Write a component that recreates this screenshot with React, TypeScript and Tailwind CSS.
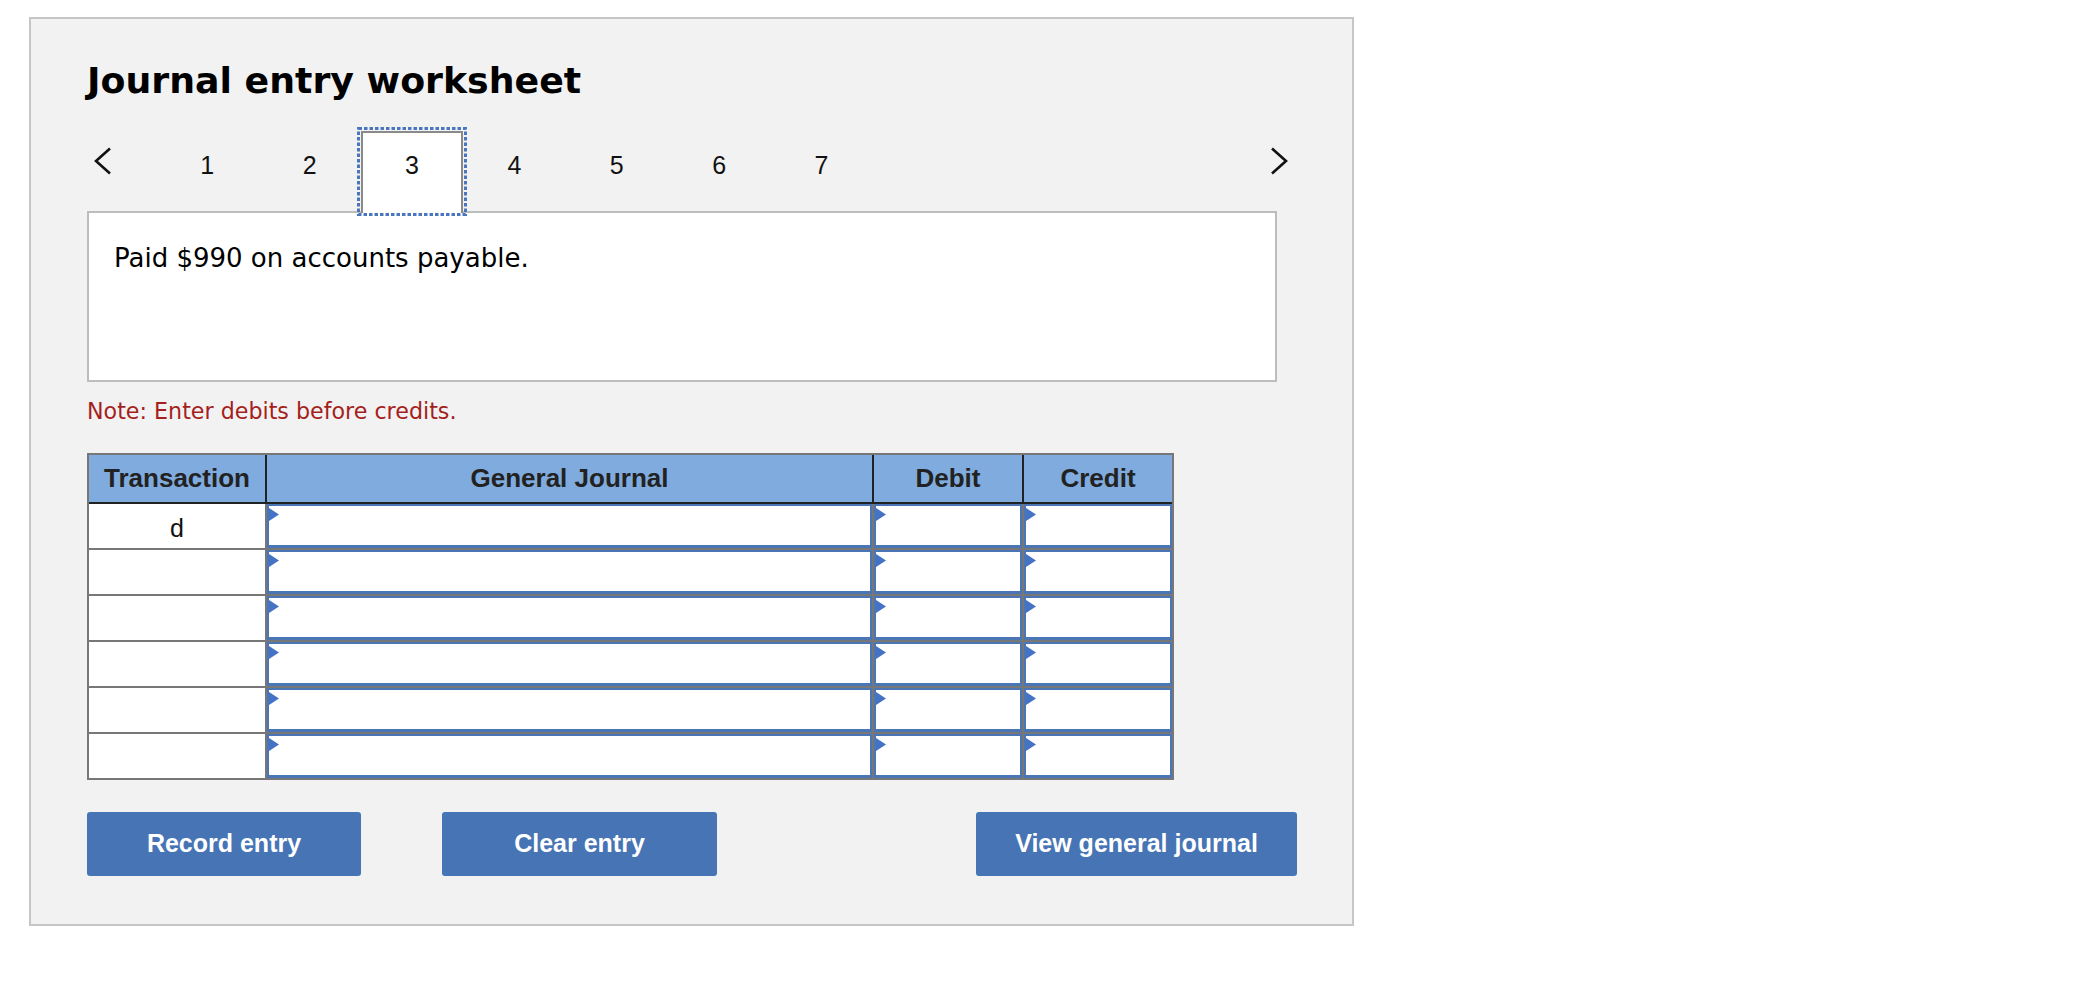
import React from 'react';

const rows = ['d', '', '', '', '', ''];
const steps = [1, 2, 3, 4, 5, 6, 7];

function Chevron({ dir }: { dir: 'left' | 'right' }) {
  return (
    <svg width="20" height="28" viewBox="0 0 20 28" fill="none" stroke="#111" strokeWidth="2.6">
      <polyline points={dir === 'left' ? '17,1.5 3,14 17,26.5' : '3,1.5 17,14 3,26.5'} />
    </svg>
  );
}

function Marker() {
  return (
    <svg className="absolute left-[2px] top-[4px]" width="10" height="13" viewBox="0 0 10 13">
      <polygon points="0,0 10,6.5 0,13" fill="#4472c4" />
    </svg>
  );
}

function InputCell({ width }: { width: string }) {
  return (
    <div className={`relative h-full border-l-2 border-[#777] ${width}`}>
      <div className="h-full border-2 border-b-[3px] border-[#4a76b6] bg-white" />
      <Marker />
    </div>
  );
}

export default function App() {
  return (
    <div className="min-h-screen bg-white pl-[29px] pt-[17px] font-['Liberation_Sans',Arial,sans-serif]">
      <div className="w-[1325px] h-[909px] border-2 border-[#c6c6c6] bg-[#f2f2f2] pl-[56px] pr-[55px] pt-[40px]">
        <h1 className="font-['DejaVu_Sans',sans-serif] font-bold text-[36.3px] leading-[44px] text-black">
          Journal entry worksheet
        </h1>

        {/* step tabs */}
        <div className="relative z-10 mt-[28px] -mb-[2px] flex items-start h-[82px]">
          <div className="w-[69px] pl-[6px] pt-[16px]">
            <Chevron dir="left" />
          </div>
          <div className="flex">
            {steps.map((n) =>
              n === 3 ? (
                <div
                  key={n}
                  className="relative w-[102.4px] h-[82px] text-center text-[25px] leading-[29px] pt-[18px] text-[#111] bg-white border-2 border-b-0 border-[#8a8a8a]"
                >
                  {n}
                  <svg className="absolute -left-[6px] -top-[6px]" width="110" height="89" viewBox="0 0 110 89">
                    <rect x="1.5" y="1.5" width="107" height="86" fill="none" stroke="#4a76c0" strokeWidth="3" strokeDasharray="3.5 2" />
                  </svg>
                </div>
              ) : (
                <div key={n} className="w-[102.4px] h-[82px] text-center text-[25px] leading-[29px] pt-[20px] text-[#111]">
                  {n}
                </div>
              )
            )}
          </div>
          <div className="flex-1" />
          <div className="pt-[16px] mr-[8px]">
            <Chevron dir="right" />
          </div>
        </div>

        <div className="w-[1190px] h-[171px] border-2 border-[#bdbdbd] bg-white pl-[25px] pt-[30px] font-['DejaVu_Sans',sans-serif] text-[26px] leading-[30px] text-black">
          Paid $990 on accounts payable.
        </div>

        <p className="mt-[16px] font-['DejaVu_Sans',sans-serif] text-[22.2px] leading-[26px] text-[#a51f1c]">
          Note: Enter debits before credits.
        </p>

        {/* journal table */}
        <div className="mt-[29px] w-[1087px] border-x-2 border-t-2 border-[#777]">
          <div className="flex h-[49px] bg-[#80abde] border-b-2 border-[#222] text-[26px] font-bold text-[#222]">
            <div className="w-[176px] flex items-center justify-center">Transaction</div>
            <div className="w-[607px] border-l-2 border-[#222] flex items-center justify-center">General Journal</div>
            <div className="w-[150px] border-l-2 border-[#222] flex items-center justify-center">Debit</div>
            <div className="w-[150px] border-l-2 border-[#222] flex items-center justify-center">Credit</div>
          </div>
          {rows.map((t, i) => (
            <div key={i} className="flex h-[46px] border-b-2 border-[#777]">
              <div className="w-[176px] bg-white flex items-center justify-center pt-[5px] text-[25px] text-[#111]">{t}</div>
              <InputCell width="w-[607px]" />
              <InputCell width="w-[150px]" />
              <InputCell width="w-[150px]" />
            </div>
          ))}
        </div>

        <div className="mt-[32px] flex">
          <button className="w-[274px] h-[64px] rounded-[3px] bg-[#4674b4] text-white font-bold text-[25px]">
            Record entry
          </button>
          <button className="ml-[81px] w-[275px] h-[64px] rounded-[3px] bg-[#4674b4] text-white font-bold text-[25px]">
            Clear entry
          </button>
          <button className="ml-auto w-[321px] h-[64px] rounded-[3px] bg-[#4674b4] text-white font-bold text-[25px]">
            View general journal
          </button>
        </div>
      </div>
    </div>
  );
}
